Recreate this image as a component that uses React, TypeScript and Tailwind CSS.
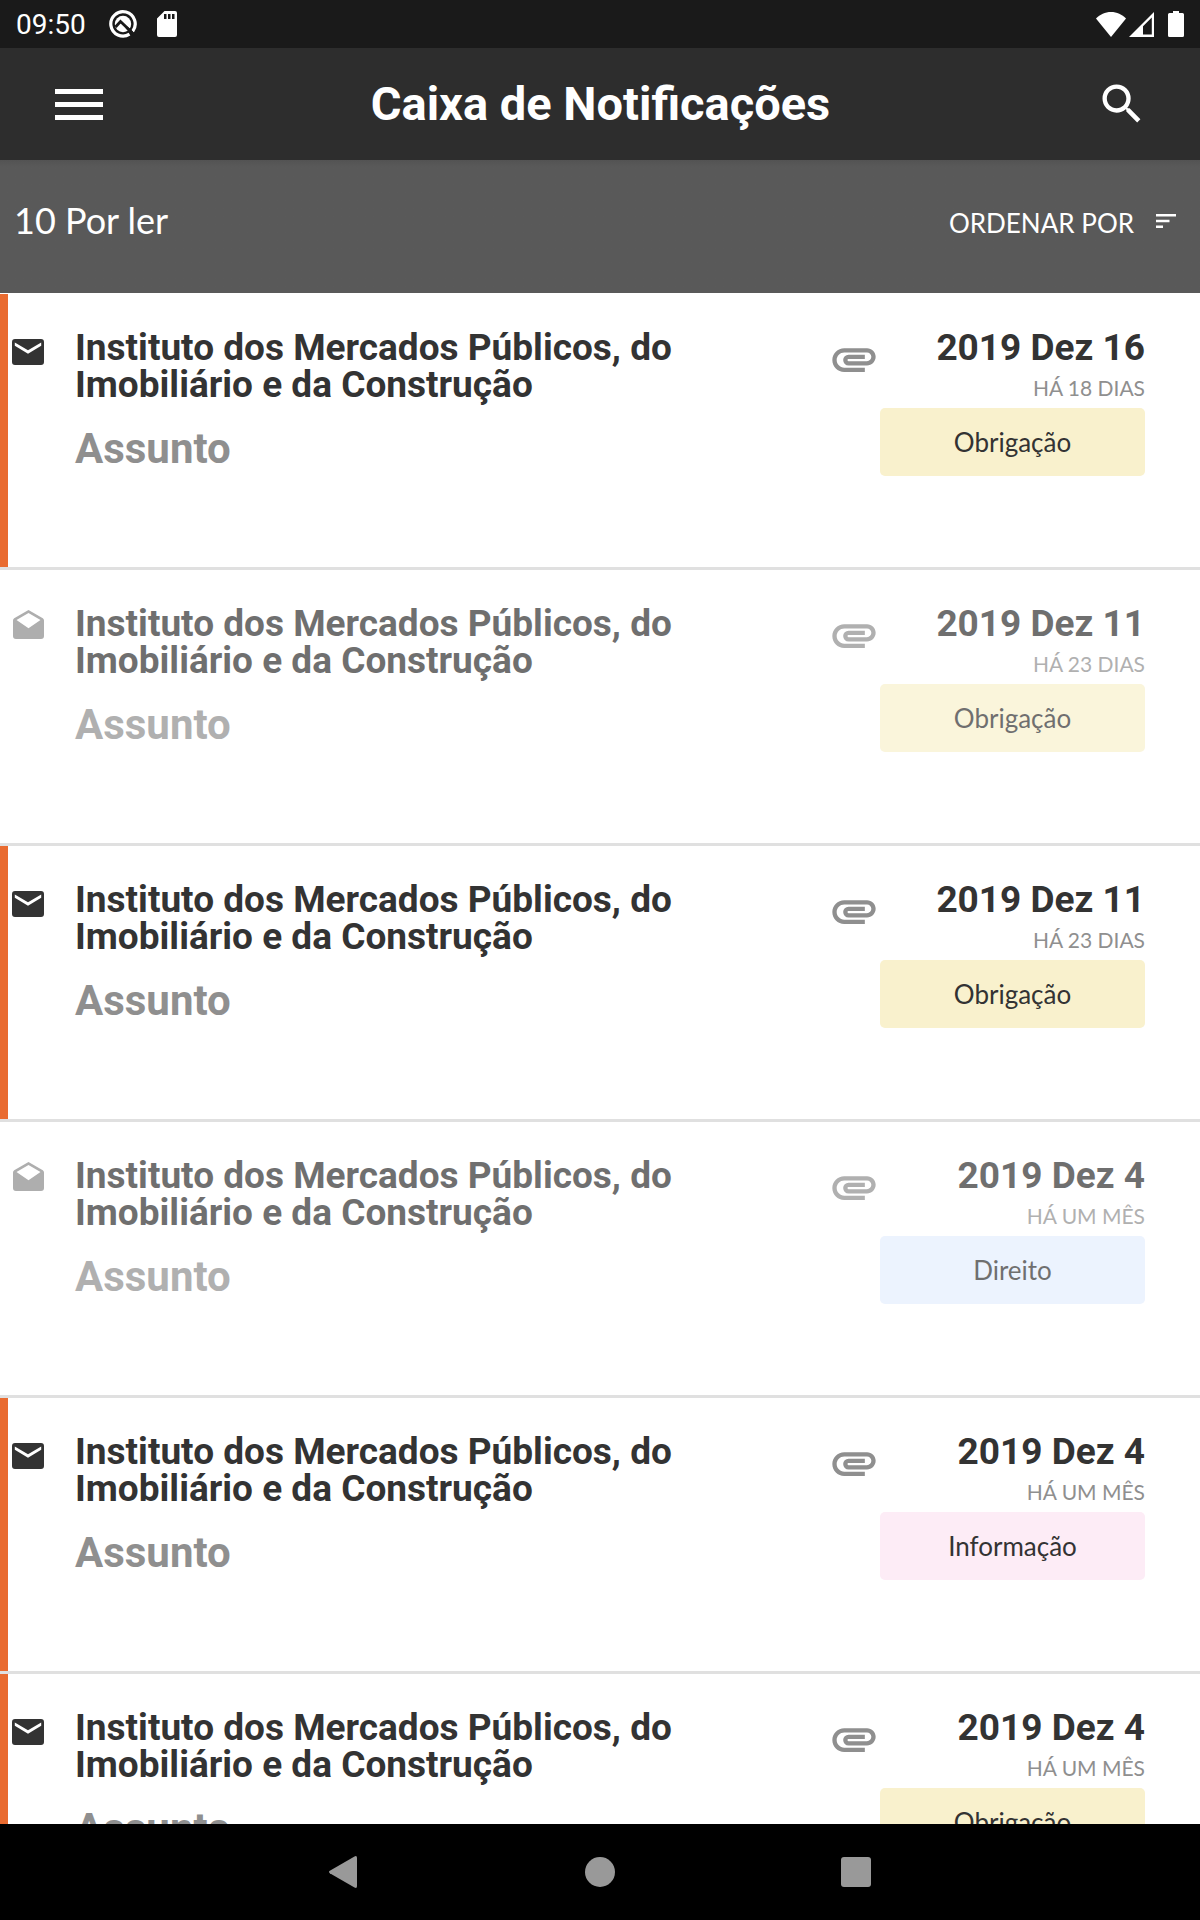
import { MdAttachment, MdSearch } from "react-icons/md";

type Kind = "Obrigação" | "Direito" | "Informação";

interface Notice {
  unread: boolean;
  date: string;
  age: string;
  kind: Kind;
}

const notices: Notice[] = [
  { unread: true, date: "2019 Dez 16", age: "HÁ 18 DIAS", kind: "Obrigação" },
  { unread: false, date: "2019 Dez 11", age: "HÁ 23 DIAS", kind: "Obrigação" },
  { unread: true, date: "2019 Dez 11", age: "HÁ 23 DIAS", kind: "Obrigação" },
  { unread: false, date: "2019 Dez 4", age: "HÁ UM MÊS", kind: "Direito" },
  { unread: true, date: "2019 Dez 4", age: "HÁ UM MÊS", kind: "Informação" },
  { unread: true, date: "2019 Dez 4", age: "HÁ UM MÊS", kind: "Obrigação" },
];

const kindColor: Record<Kind, string> = {
  Obrigação: "bg-[#f9f1cd]",
  Direito: "bg-[#e5eefe]",
  Informação: "bg-[#fdecf6]",
};

function StatusBar() {
  return (
    <div className="flex h-12 shrink-0 items-center justify-between bg-[#1a1a1a] px-4 text-white">
      <div className="flex items-center">
        <span className="pt-0.5 text-[28px] leading-8">09:50</span>
        <svg className="ml-[23px] size-7" viewBox="0 0 28 28" fill="none" aria-hidden="true">
          <path d="M20.5 24.2A12.2 12.2 0 1 1 23.6 21.4" stroke="currentColor" strokeWidth="3.2" />
          <circle cx="14" cy="14" r="8.2" fill="currentColor" />
          <path d="M6.5 17L11.500 11.500L23 22.500" stroke="#1a1a1a" strokeWidth="2.800" />
          <path d="M17.500 17.500L25.500 25" stroke="#1a1a1a" strokeWidth="2.500" />
        </svg>
        <svg className="ml-5 h-[26px] w-5" viewBox="0 0 20 26" aria-hidden="true">
          <path fill="currentColor" fillRule="evenodd" d="M7.500 0H18a2 2 0 0 1 2 2v22a2 2 0 0 1-2 2H2a2 2 0 0 1-2-2V7.500zM7 3v5h2.500V3zm4 0v5h2.500V3zm4 0v5h2.500V3z" />
        </svg>
      </div>
      <div className="flex items-center">
        <svg className="h-[25px] w-[30px]" viewBox="0 0 30 25" fill="currentColor" aria-hidden="true">
          <path d="M15 25L0 6.500C4 2.500 9 0 15 0s11 2.500 15 6.500z" />
        </svg>
        <svg className="ml-[3px] size-[25px]" viewBox="0 0 25 25" fill="currentColor" aria-hidden="true">
          <path fillRule="evenodd" d="M25 0v25H0zM22.800 5.500L14 14.300V22.500h8.800z" />
        </svg>
        <svg className="ml-3.5 h-[26px] w-4" viewBox="0 0 16 26" fill="currentColor" aria-hidden="true">
          <path d="M5 0h6v2h3.500A1.500 1.500 0 0 1 16 3.500v21a1.500 1.500 0 0 1-1.500 1.500h-13A1.500 1.500 0 0 1 0 24.500v-21A1.500 1.500 0 0 1 1.500 2H5z" />
        </svg>
      </div>
    </div>
  );
}

function AppBar() {
  return (
    <header className="flex h-28 shrink-0 items-center justify-between bg-[#2d2d2d] pr-[54px] pl-[55px] text-white">
      <button type="button" aria-label="Menu" className="flex w-12 flex-col gap-2">
        <span className="h-[5px] w-full bg-white" />
        <span className="h-[5px] w-full bg-white" />
        <span className="h-[5px] w-full bg-white" />
      </button>
      <h1 className="text-[47px] leading-[56px] font-bold">Caixa de Notificações</h1>
      <button type="button" aria-label="Pesquisar" className="flex w-12 justify-center">
        <MdSearch className="size-[52px] shrink-0" />
      </button>
    </header>
  );
}

function SortBar() {
  return (
    <div className="flex h-[133px] shrink-0 items-center justify-between bg-[#595959] bg-linear-to-b from-[#535353] to-[#595959] to-5% pr-6 pl-3.5 font-['Lato',sans-serif] text-white">
      <span className="pb-3.5 text-[36px] leading-11">10 Por ler</span>
      <button type="button" className="flex items-center gap-[22px] pb-2 text-[26px] leading-8">
        ORDENAR POR
        <svg className="mb-1 h-3.5 w-5" viewBox="0 0 20 14" fill="currentColor" aria-hidden="true">
          <path d="M0 0h20v2.500H0zM0 5.800h13.500v2.400H0zM0 11.500h7V14H0z" />
        </svg>
      </button>
    </div>
  );
}

function MailIcon({ unread }: { unread: boolean }) {
  return unread ? (
    <svg className="mt-[14px] ml-1 h-[26px] w-8 shrink-0" viewBox="0 0 32 26" role="img" aria-label="Por ler">
      <path fill="#333" fillRule="evenodd" d="M3 0h26a3 3 0 0 1 3 3v20a3 3 0 0 1-3 3H3a3 3 0 0 1-3-3V3a3 3 0 0 1 3-3zM2.800 3.500v3.200L16 14.800l13.200-8.100V3.500L16 11.300z" />
    </svg>
  ) : (
    <svg className="mt-[9px] ml-[5px] h-[29px] w-[31px] shrink-0" viewBox="0 0 31 29" role="img" aria-label="Lida">
      <path fill="#8c8c8c" fillRule="evenodd" d="M15.500 0L29.800 8.200Q31 9 31 10.500V26a3 3 0 0 1-3 3H3a3 3 0 0 1-3-3V10.500Q0 9 1.200 8.200zM3.500 10L15.500 18.300L27.500 10L15.500 3z" />
    </svg>
  );
}

function NoticeRow({ unread, date, age, kind }: Notice) {
  return (
    <li className="flex h-[276px] shrink-0 border-b-3 border-[#e0e0e0]">
      <div className={unread ? "w-2 shrink-0 bg-[#e96b30]" : "w-2 shrink-0"} />
      <article className={unread ? "flex flex-1 pt-[31px] pr-[55px]" : "flex flex-1 pt-[31px] pr-[55px] opacity-70"}>
        <div className="w-[67px] shrink-0">
          <MailIcon unread={unread} />
        </div>
        <div className="flex-1 pt-1">
          <h2 className="max-w-[640px] text-[37px] leading-[37px] font-bold text-[#333]">
            Instituto dos Mercados Públicos, do Imobiliário e da Construção
          </h2>
          <p className="mt-[22px] text-[42px] leading-12 font-bold text-[#8f8f8f]">Assunto</p>
        </div>
        <MdAttachment className="mt-2 size-[52px] shrink-0 text-[#8f8f8f]" role="img" aria-label="Anexo" />
        <div className="flex w-[265px] shrink-0 flex-col font-['Lato',sans-serif]">
          <time className="pt-1 text-right font-['Roboto',sans-serif] text-[37px] leading-[37px] font-bold text-[#333]">{date}</time>
          <span className="mt-2 mb-0.5 text-right text-[21px] leading-7 text-[#8f8f8f]">{age}</span>
          <span className={`mt-1 flex h-[68px] items-center justify-center rounded-[5px] text-[26px] text-[#333] ${kindColor[kind]}`}>
            {kind}
          </span>
        </div>
      </article>
    </li>
  );
}

function NavBar() {
  return (
    <nav className="flex h-24 shrink-0 items-center justify-center gap-[226px] bg-black text-[#999]">
      <button type="button" aria-label="Voltar">
        <svg className="h-8 w-[30px]" viewBox="0 0 30 32" fill="currentColor">
          <path d="M.8 14.800L25.500.5Q28-.8 28 2v28q0 2.800-2.500 1.500L.8 17.200Q-.8 16 .8 14.800z" />
        </svg>
      </button>
      <button type="button" aria-label="Início" className="size-[30px] rounded-full bg-[#999]" />
      <button type="button" aria-label="Recentes" className="size-[30px] rounded-[3px] bg-[#999]" />
    </nav>
  );
}

export default function App() {
  return (
    <div className="flex h-screen flex-col bg-white font-['Roboto',sans-serif]">
      <StatusBar />
      <AppBar />
      <SortBar />
      <main className="min-h-0 flex-1 overflow-hidden pt-px">
        <ul className="flex flex-col">
          {notices.map((notice, i) => (
            <NoticeRow key={i} {...notice} />
          ))}
        </ul>
      </main>
      <NavBar />
    </div>
  );
}
